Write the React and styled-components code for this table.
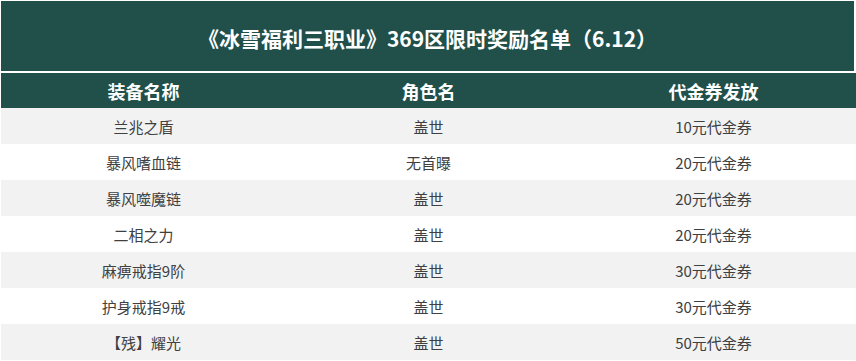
import React from "react";
import styled, { createGlobalStyle } from "styled-components";

const GlobalStyle = createGlobalStyle`
  html, body {
    margin: 0;
    padding: 0;
    background: #fff;
  }
  body {
    font-family: "Noto Sans CJK SC", "Noto Sans", sans-serif;
  }
`;

const Sheet = styled.div`
  width: 855px;
  padding: 1px 0 0 1px;
`;

const TitleBar = styled.div`
  height: 70px;
  margin-right: 2px;
  background: #214f4a;
  color: #fff;
  font-size: 21px;
  font-weight: 700;
  display: flex;
  align-items: center;
  justify-content: center;
  padding-top: 3px;
  box-sizing: border-box;
`;

const Grid = styled.div`
  margin-top: 2px;
  display: grid;
  grid-template-columns: repeat(3, 1fr);
`;

const HeadCell = styled.div`
  height: 35px;
  background: #214f4a;
  color: #fff;
  font-size: 18px;
  font-weight: 700;
  display: flex;
  align-items: center;
  justify-content: center;
`;

const Cell = styled.div`
  height: 36px;
  background: ${(p) => (p.$shaded ? "#f2f2f2" : "#fff")};
  color: #404040;
  font-size: 15px;
  display: flex;
  align-items: center;
  justify-content: center;
`;

const rows = [
  ["兰兆之盾", "盖世", "10元代金券"],
  ["暴风嗜血链", "无首曝", "20元代金券"],
  ["暴风噬魔链", "盖世", "20元代金券"],
  ["二相之力", "盖世", "20元代金券"],
  ["麻痹戒指9阶", "盖世", "30元代金券"],
  ["护身戒指9戒", "盖世", "30元代金券"],
  ["【残】耀光", "盖世", "50元代金券"],
];

const App = () => (
  <>
    <GlobalStyle />
    <Sheet>
      <TitleBar>《冰雪福利三职业》369区限时奖励名单（6.12）</TitleBar>
      <Grid>
        <HeadCell>装备名称</HeadCell>
        <HeadCell>角色名</HeadCell>
        <HeadCell>代金券发放</HeadCell>
        {rows.map((row, i) =>
          row.map((text, j) => (
            <Cell key={`${i}-${j}`} $shaded={i % 2 === 0}>
              {text}
            </Cell>
          ))
        )}
      </Grid>
    </Sheet>
  </>
);

export default App;
